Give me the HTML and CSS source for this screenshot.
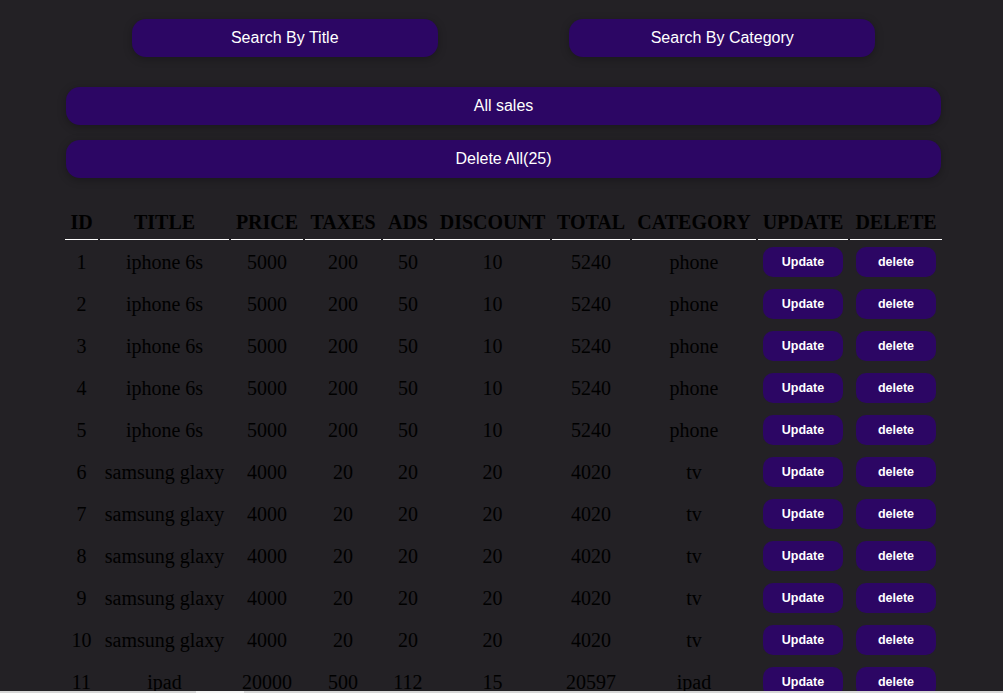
FILE: index.html
```html
<!DOCTYPE html>
<html lang="en">
<head>
<meta charset="utf-8">
<title>CRUDS</title>
<link rel="stylesheet" href="styles.css">
</head>
<body>
<div class="crud">
  <div class="search-row">
    <button class="btn btn-search">Search By Title</button>
    <button class="btn btn-search">Search By Category</button>
  </div>
  <button class="btn btn-wide btn-all">All sales</button>
  <button class="btn btn-wide btn-delete-all">Delete All(25)</button>
  <table class="sales">
    <colgroup>
      <col class="c-id"><col class="c-title"><col class="c-price"><col class="c-taxes"><col class="c-ads">
      <col class="c-discount"><col class="c-total"><col class="c-category"><col class="c-update"><col class="c-delete">
    </colgroup>
    <thead>
      <tr><th>ID</th><th>TITLE</th><th>PRICE</th><th>TAXES</th><th>ADS</th><th>DISCOUNT</th><th>TOTAL</th><th>CATEGORY</th><th>UPDATE</th><th>DELETE</th></tr>
    </thead>
    <tbody>
      <tr><td>1</td><td>iphone 6s</td><td>5000</td><td>200</td><td>50</td><td>10</td><td>5240</td><td>phone</td><td><button class="row-btn">Update</button></td><td><button class="row-btn">delete</button></td></tr>
      <tr><td>2</td><td>iphone 6s</td><td>5000</td><td>200</td><td>50</td><td>10</td><td>5240</td><td>phone</td><td><button class="row-btn">Update</button></td><td><button class="row-btn">delete</button></td></tr>
      <tr><td>3</td><td>iphone 6s</td><td>5000</td><td>200</td><td>50</td><td>10</td><td>5240</td><td>phone</td><td><button class="row-btn">Update</button></td><td><button class="row-btn">delete</button></td></tr>
      <tr><td>4</td><td>iphone 6s</td><td>5000</td><td>200</td><td>50</td><td>10</td><td>5240</td><td>phone</td><td><button class="row-btn">Update</button></td><td><button class="row-btn">delete</button></td></tr>
      <tr><td>5</td><td>iphone 6s</td><td>5000</td><td>200</td><td>50</td><td>10</td><td>5240</td><td>phone</td><td><button class="row-btn">Update</button></td><td><button class="row-btn">delete</button></td></tr>
      <tr><td>6</td><td>samsung glaxy</td><td>4000</td><td>20</td><td>20</td><td>20</td><td>4020</td><td>tv</td><td><button class="row-btn">Update</button></td><td><button class="row-btn">delete</button></td></tr>
      <tr><td>7</td><td>samsung glaxy</td><td>4000</td><td>20</td><td>20</td><td>20</td><td>4020</td><td>tv</td><td><button class="row-btn">Update</button></td><td><button class="row-btn">delete</button></td></tr>
      <tr><td>8</td><td>samsung glaxy</td><td>4000</td><td>20</td><td>20</td><td>20</td><td>4020</td><td>tv</td><td><button class="row-btn">Update</button></td><td><button class="row-btn">delete</button></td></tr>
      <tr><td>9</td><td>samsung glaxy</td><td>4000</td><td>20</td><td>20</td><td>20</td><td>4020</td><td>tv</td><td><button class="row-btn">Update</button></td><td><button class="row-btn">delete</button></td></tr>
      <tr><td>10</td><td>samsung glaxy</td><td>4000</td><td>20</td><td>20</td><td>20</td><td>4020</td><td>tv</td><td><button class="row-btn">Update</button></td><td><button class="row-btn">delete</button></td></tr>
      <tr><td>11</td><td>ipad</td><td>20000</td><td>500</td><td>112</td><td>15</td><td>20597</td><td>ipad</td><td><button class="row-btn">Update</button></td><td><button class="row-btn">delete</button></td></tr>
    </tbody>
  </table>
</div>
<div class="bottom-strip"><span class="strip-thumb"></span></div>
</body>
</html>
```

FILE: styles.css
```css
html, body {
  background: #232125;
}
body {
  margin: 0;
  padding: 19px 0 0 4px;
  font-family: "Liberation Serif", "Times New Roman", serif;
  color: #000;
  overflow: hidden;
}
.crud {
  width: 875px;
  margin: 0 auto;
}
.btn {
  display: block;
  border: none;
  background: #2c0664;
  color: #fff;
  font-family: "Liberation Sans", Arial, sans-serif;
  font-size: 16px;
  line-height: 18px;
  height: 38px;
  padding: 10px 0;
  border-radius: 14px;
  box-shadow: 0 2px 8px rgba(0, 0, 0, 0.28);
  cursor: pointer;
}
.search-row {
  display: flex;
  justify-content: space-around;
}
.btn-search {
  width: 35%;
}
.btn-wide {
  width: 100%;
}
.btn-all {
  margin-top: 30px;
}
.btn-delete-all {
  margin-top: 15px;
}
.sales {
  width: calc(100% + 6px);
  margin: 27px 0 0 -3px;
  table-layout: fixed;
  border-spacing: 2px;
  text-align: center;
  font-size: 20px;
}
.c-id { width: 33px; }
.c-title { width: 129px; }
.c-price { width: 72px; }
.c-taxes { width: 76px; }
.c-ads { width: 50px; }
.c-discount { width: 115px; }
.c-total { width: 78px; }
.c-category { width: 124px; }
.c-update { width: 90px; }
.c-delete { width: 92px; }
.sales th {
  padding: 4px 0 5px;
  line-height: 23px;
  font-weight: bold;
  border-bottom: 1px solid #fff;
  white-space: nowrap;
}
.sales td {
  padding: 5px 0;
  height: 30px;
  line-height: 23px;
  white-space: nowrap;
}
.row-btn {
  display: block;
  margin: 0 auto;
  width: 80px;
  height: 30px;
  padding: 0;
  border: none;
  border-radius: 10px;
  background: #2c0664;
  color: #fff;
  font-family: "Liberation Sans", Arial, sans-serif;
  font-weight: bold;
  font-size: 12.5px;
  line-height: 30px;
  cursor: pointer;
}
.bottom-strip {
  position: fixed;
  left: 0;
  right: 0;
  bottom: 0;
  height: 2px;
  background: #d6d6d6;
}
.strip-thumb {
  position: absolute;
  left: 196px;
  width: 48px;
  top: 0;
  bottom: 0;
  background: #f2f2f2;
}
```
